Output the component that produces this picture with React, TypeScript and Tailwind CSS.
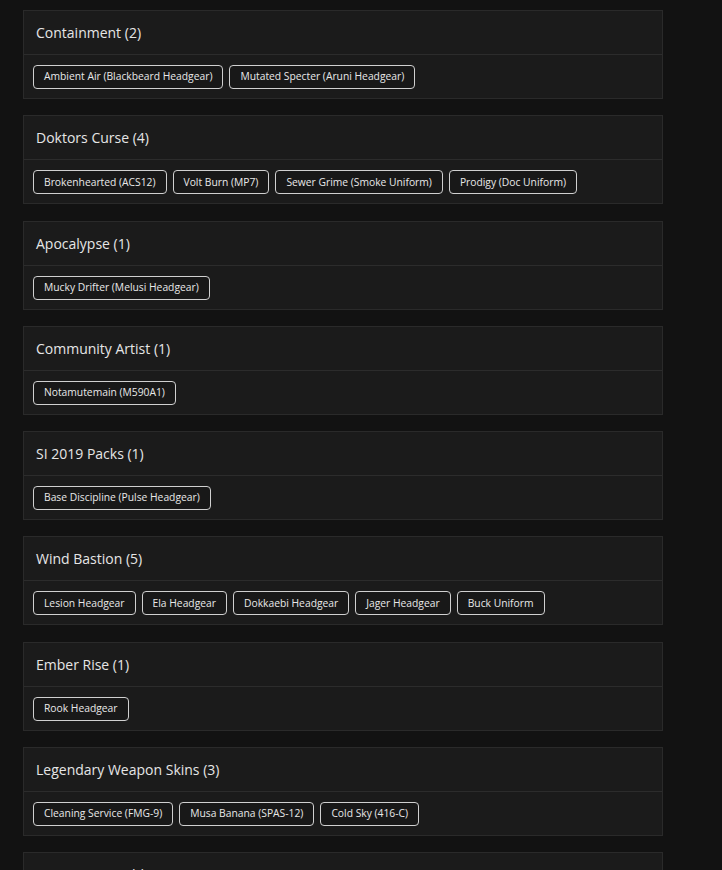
const packs = [
  { name: "Containment", items: ["Ambient Air (Blackbeard Headgear)", "Mutated Specter (Aruni Headgear)"] },
  { name: "Doktors Curse", items: ["Brokenhearted (ACS12)", "Volt Burn (MP7)", "Sewer Grime (Smoke Uniform)", "Prodigy (Doc Uniform)"] },
  { name: "Apocalypse", items: ["Mucky Drifter (Melusi Headgear)"] },
  { name: "Community Artist", items: ["Notamutemain (M590A1)"] },
  { name: "SI 2019 Packs", items: ["Base Discipline (Pulse Headgear)"] },
  { name: "Wind Bastion", items: ["Lesion Headgear", "Ela Headgear", "Dokkaebi Headgear", "Jager Headgear", "Buck Uniform"] },
  { name: "Ember Rise", items: ["Rook Headgear"] },
  { name: "Legendary Weapon Skins", items: ["Cleaning Service (FMG-9)", "Musa Banana (SPAS-12)", "Cold Sky (416-C)"] },
  { name: "Operation Health", items: ["Placeholder"] },
];

const PackCard = ({ name, items }: { name: string; items: string[] }) => (
  <div className="w-[640px] border border-[#2a2a2a] bg-[#1b1b1b]">
    <div className="h-[44px] flex items-center px-3 border-b border-[#2c2c2c]">
      <h3 className="text-[14px] font-medium text-[#e6e6e6]">
        {name} ({items.length})
      </h3>
    </div>
    <div className="flex flex-wrap gap-[6px] px-[9px] pt-[10px] pb-[9px]">
      {items.map((item) => (
        <span
          key={item}
          className="h-[24px] flex items-center px-[10px] rounded-[4px] border border-[#d0d0d0] text-[10.3px] text-[#e8e8e8] bg-[#181818]"
        >
          {item}
        </span>
      ))}
    </div>
  </div>
);

const App = () => {
  return (
    <div
      className="min-h-screen bg-[#121212] pt-[10px] pl-[23px]"
      style={{ fontFamily: "'Open Sans', 'Liberation Sans', sans-serif" }}
    >
      <div className="flex flex-col gap-[16.25px]">
        {packs.map((p) => (
          <PackCard key={p.name} name={p.name} items={p.items} />
        ))}
      </div>
    </div>
  );
};

export default App;
